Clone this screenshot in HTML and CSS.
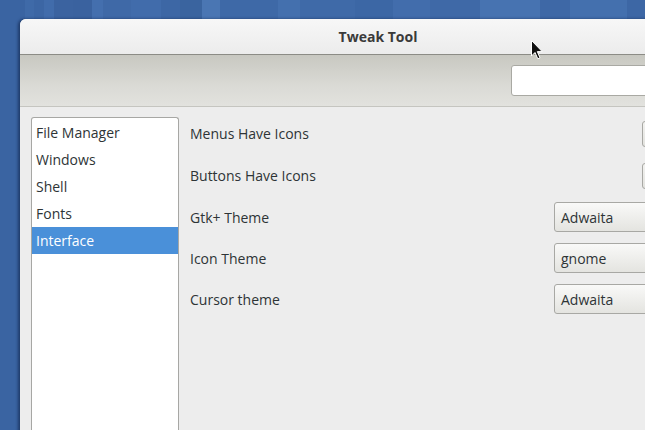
FILE: index.html
```html
<!DOCTYPE html>
<html>
<head>
<meta charset="utf-8">
<link rel="stylesheet" href="styles.css">
</head>
<body>
<div class="desktop">
  <div class="window">
    <div class="titlebar">Tweak Tool</div>
    <div class="toolbar">
      <div class="search"></div>
    </div>
    <div class="content">
      <ul class="sidebar">
        <li>File Manager</li>
        <li>Windows</li>
        <li>Shell</li>
        <li>Fonts</li>
        <li class="selected">Interface</li>
      </ul>
      <div class="settings">
        <div class="row"><span>Menus Have Icons</span><div class="switch"></div></div>
        <div class="row"><span>Buttons Have Icons</span><div class="switch"></div></div>
        <div class="row"><span>Gtk+ Theme</span><div class="combo">Adwaita</div></div>
        <div class="row"><span>Icon Theme</span><div class="combo">gnome</div></div>
        <div class="row"><span>Cursor theme</span><div class="combo">Adwaita</div></div>
      </div>
    </div>
  </div>
  <svg class="cursor" width="13" height="20" viewBox="0 0 13 20">
    <path d="M0.5 0.5 L0.5 16 L4 12.5 L6.8 18.8 L9 17.8 L6.3 11.6 L11.2 11.6 Z" fill="#111" stroke="#fff" stroke-width="1"/>
  </svg>
</div>
</body>
</html>
```
FILE: styles.css
```css
html, body {
  margin: 0;
  padding: 0;
  width: 645px;
  height: 430px;
  overflow: hidden;
}
.desktop {
  position: relative;
  width: 645px;
  height: 430px;
  overflow: hidden;
  background:
    linear-gradient(90deg,
      #3a64a2 0, #3a64a2 25px, #3f6aa8 25px, #3f6aa8 34px,
      #3c66a4 34px, #3c66a4 44px, #416cab 44px, #416cab 54px,
      #3b63a0 54px, #3b63a0 73px, #3a629f 73px, #3a629f 92px,
      #446fae 92px, #446fae 103px, #3f69a7 103px, #3f69a7 131px,
      #416cab 131px, #416cab 161px, #3d67a5 161px, #3d67a5 180px,
      #3a649f 180px, #3a649f 202px, #4a76b3 202px, #4a76b3 220px,
      #3e69a7 220px, #3e69a7 278px, #4470ae 278px, #4470ae 300px,
      #3f6aa8 300px, #3f6aa8 355px, #3c67a5 355px, #3c67a5 393px,
      #426dac 393px, #426dac 430px, #3f69a7 430px, #3f69a7 480px,
      #4773b1 480px, #4773b1 540px, #3e68a6 540px, #3e68a6 570px,
      #4470ae 570px, #4470ae 627px, #3d67a5 627px);
  font-family: "Open Sans", "DejaVu Sans", sans-serif;
  font-size: 14px;
  color: #2e3436;
}
.window {
  margin-left: 20px;
  margin-top: 19px;
  width: 716px;
  height: 420px;
  display: flex;
  flex-direction: column;
  background: #ededed;
  border-top-left-radius: 6px;
  box-shadow: -2px 0 3px rgba(10, 25, 60, 0.55);
}
.titlebar {
  height: 35px;
  flex: none;
  display: flex;
  align-items: center;
  justify-content: center;
  font-weight: bold;
  color: #3a3a3a;
  background: linear-gradient(#f7f7f7, #ececec);
  border-top-left-radius: 6px;
  border-bottom: 1px solid #8c8c86;
}
.toolbar {
  height: 51px;
  flex: none;
  display: flex;
  align-items: center;
  justify-content: flex-end;
  background: linear-gradient(#c8c8c1, #dadad5 60%, #e2e2de);
  border-bottom: 1px solid #c5c5c0;
}
.search {
  width: 207px;
  height: 29px;
  margin-right: 16px;
  background: #fff;
  border: 1px solid #a9a9a3;
  border-radius: 3px;
}
.content {
  flex: 1;
  display: flex;
  gap: 10px;
  padding: 10px 11px 0 11px;
  background: #ededed;
}
.sidebar {
  list-style: none;
  margin: 0;
  padding: 1px 0 0 0;
  width: 146px;
  background: #fff;
  border: 1px solid #a7a7a4;
  border-bottom: none;
  border-top-left-radius: 3px;
  border-top-right-radius: 3px;
}
.sidebar li {
  height: 27px;
  line-height: 27px;
  padding-left: 4px;
  color: #2e3436;
}
.sidebar li.selected {
  background: #4a90d9;
  color: #fff;
}
.settings {
  flex: 1;
  display: grid;
  grid-template-rows: 31px 31px 30px 30px 30px;
  row-gap: 11px;
  align-content: start;
  padding-top: 1px;
  padding-left: 1px;
}
.row {
  display: flex;
  align-items: center;
  justify-content: space-between;
}
.switch {
  width: 83px;
  height: 26px;
  box-sizing: border-box;
  border: 1px solid #a8a8a4;
  border-radius: 3px;
  background: linear-gradient(#f2f2f0, #e2e2de);
}
.combo {
  width: 171px;
  height: 30px;
  box-sizing: border-box;
  padding-left: 6px;
  display: flex;
  align-items: center;
  border: 1px solid #a8a8a4;
  border-radius: 3px;
  background: linear-gradient(#f9f9f8, #e4e4e0);
  color: #2e3436;
}
.cursor {
  position: absolute;
  left: 531px;
  top: 40px;
}
```
